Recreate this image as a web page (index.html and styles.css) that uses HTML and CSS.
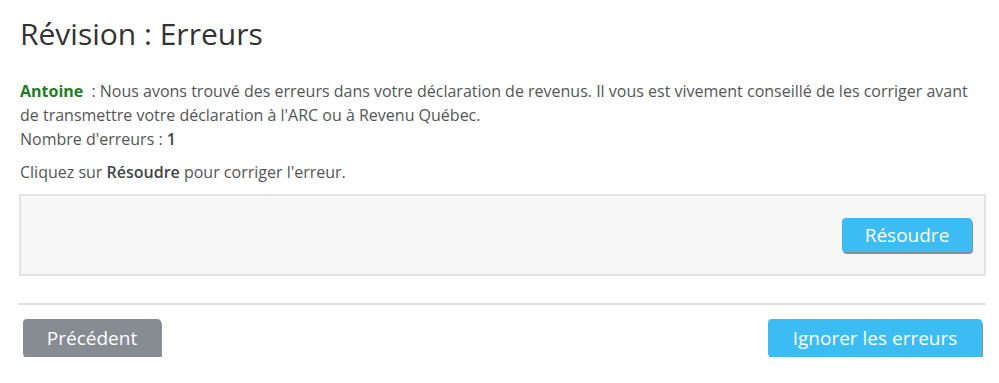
FILE: index.html
```html
<!DOCTYPE html>
<html lang="fr">
<head>
    <meta charset="UTF-8">
    <title>Révision : Erreurs</title>
    <link rel="stylesheet" href="styles.css">
</head>
<body>
    <div class="page">
        <h1 class="title">Révision : Erreurs</h1>

        <!-- Message d'erreurs -->
        <p class="intro">
            <span class="name">Antoine</span> : Nous avons trouvé des erreurs dans votre déclaration de revenus. Il vous est vivement conseillé de les corriger avant de transmettre votre déclaration à l'ARC ou à Revenu Québec.<br>
            Nombre d'erreurs : <b>1</b>
        </p>
        <p class="hint">Cliquez sur <b>Résoudre</b> pour corriger l'erreur.</p>

        <div class="error-box">
            <button class="btn blue btn-small">Résoudre</button>
        </div>

        <div class="footer">
            <button class="btn gray">Précédent</button>
            <button class="btn blue">Ignorer les erreurs</button>
        </div>
    </div>
</body>
</html>
```

FILE: styles.css
```css
body {
    margin: 0;
    background: #fff;
    font-family: "Open Sans", "Noto Sans", sans-serif;
    color: #555;
}
.page {
    padding: 14px 13px 0 19px;
}
.title {
    font-size: 30px;
    font-weight: normal;
    color: #333;
    margin: 0 0 0 1px;
    line-height: 40px;
}
.intro {
    margin: 25px 0 0 1px;
    font-size: 16px;
    line-height: 24px;
}
.intro b, .hint b {
    color: #444;
    font-weight: 600;
}
.name {
    color: #1e7d1e;
    font-weight: bold;
    margin-right: 4px;
}
.hint {
    margin: 9px 0 0 1px;
    font-size: 16px;
    line-height: 24px;
}
/* Boite d'erreur */
.error-box {
    margin-top: 10px;
    height: 78px;
    border: 2px solid #e3e3e3;
    background: #f7f7f7;
    display: flex;
    justify-content: flex-end;
    align-items: center;
    padding-right: 12px;
}
.btn {
    font-family: inherit;
    font-size: 19px;
    color: #fff;
    border: none;
    border-radius: 4px;
    cursor: pointer;
    height: 38px;
    padding: 0 20px;
    box-shadow: 1px 2px 0 rgba(40, 60, 80, 0.55);
}
.btn-small {
    height: 34px;
    width: 130px;
    padding: 0;
}
.blue {
    background-color: #3bbdf3;
}
.gray {
    background-color: #878b92;
}
.footer {
    margin-top: 27px;
    border-top: 2px solid #e0e0e0;
    padding: 14px 4px 0 4px;
    display: flex;
    justify-content: space-between;
}
.footer .gray {
    width: 138px;
}
.footer .blue {
    width: 214px;
}
```
